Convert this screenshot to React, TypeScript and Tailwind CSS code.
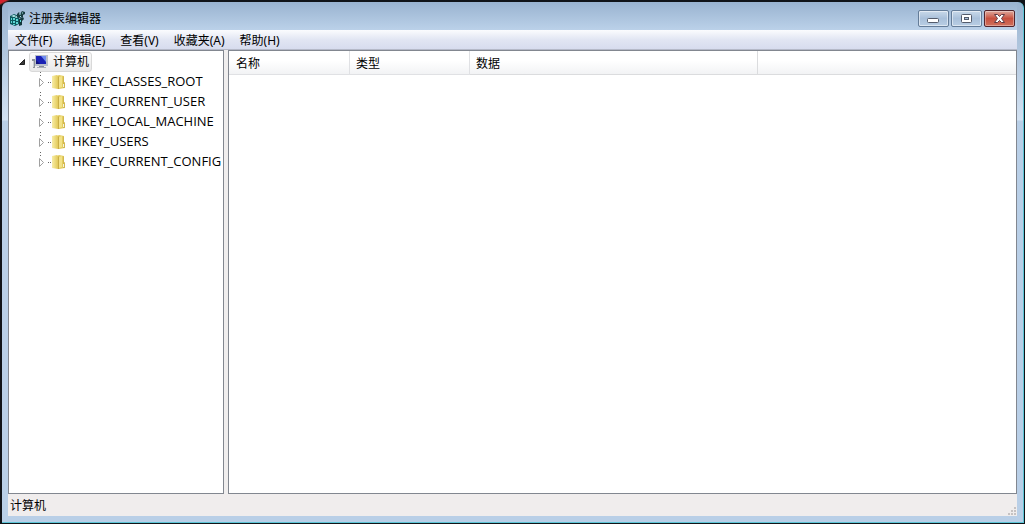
import type { ReactNode } from "react";

const menus = ["文件(F)", "编辑(E)", "查看(V)", "收藏夹(A)", "帮助(H)"];

const hives = [
  "HKEY_CLASSES_ROOT",
  "HKEY_CURRENT_USER",
  "HKEY_LOCAL_MACHINE",
  "HKEY_USERS",
  "HKEY_CURRENT_CONFIG",
];

function RegeditIcon() {
  return (
    <svg width="17" height="17" viewBox="0 0 17 17" className="shrink-0" aria-hidden="true">
      <path d="M1 6l4-2 5 2v8l-4 2-5-2z" fill="#0d5a5e" />
      <path d="M2 6l3-1 2 1-2 1zM6 7l2-1 1 1-2 1z" fill="#c8f8f6" />
      <path
        d="M2 8h1v2H2zM4 8h2v2H4zM2 11h1v2H2zM4 11h2v2H4zM7 9h2v2H7zM7 12h2v2H7zM4 14h2v1H4z"
        fill="#5cd6d4"
      />
      <path d="M8 4l2-2 1 2 2-3 3 1v2l-2 1v2l-3 1-3-1z" fill="#1b3d42" />
      <path d="M10 4l1-1 1 1-1 1zM13 3l1-1v2zM11 6h1v1h-1z" fill="#a3e6e6" />
      <path d="M10 9l4-2 1 2-2 2v4l-3 1z" fill="#14383d" />
      <path d="M11 10h1v2h-1z" fill="#5cd6d4" />
    </svg>
  );
}

function ComputerIcon() {
  return (
    <svg width="18" height="16" viewBox="0 0 18 16" className="shrink-0" aria-hidden="true">
      <path d="M0 5h3v9H1V7H0z" fill="#8d9299" />
      <path d="M1 7h1v6H1z" fill="#c9cdd3" />
      <rect x="3" y="1" width="13" height="11" fill="#b9bfcb" />
      <rect x="4" y="2" width="10" height="8" fill="#1a22b4" />
      <path d="M9 2h5v6z" fill="#6f8cf0" />
      <path d="M4 6l4 4H4z" fill="#10137c" />
      <path d="M7 12h5v1H7z" fill="#8a909a" />
      <path d="M5 13h9v1H5z" fill="#a9afb9" />
    </svg>
  );
}

function FolderIcon() {
  return (
    <svg width="16" height="18" viewBox="0 0 16 18" className="shrink-0" aria-hidden="true">
      <defs>
        <linearGradient id="folderFront" x1="0" x2="1" y1="0" y2="0">
          <stop offset="0" stopColor="#f8eda6" />
          <stop offset="1" stopColor="#e2ca5a" />
        </linearGradient>
      </defs>
      <path d="M6 3l2-1 5 1v6l1 1v5l-6 1z" fill="#e4cd60" />
      <path d="M12 3l1 1v5l1 1v5h-2z" fill="#d2b850" />
      <path d="M1 3l5-1 1 1v13l-6-1z" fill="url(#folderFront)" />
      <path d="M7 4l1-1v13H7z" fill="#c9ad44" />
      <path d="M8 4l3-1v11l-3 1z" fill="#f2e288" />
      <path d="M12 11h1v3h-1z" fill="#f4f2df" />
    </svg>
  );
}

function Grip() {
  return (
    <svg width="9" height="9" viewBox="0 0 9 9" className="shrink-0" aria-hidden="true">
      <path
        d="M6 0h2v2H6zM3 3h2v2H3zM6 3h2v2H6zM0 6h2v2H0zM3 6h2v2H3zM6 6h2v2H6z"
        fill="#c6c2c2"
      />
    </svg>
  );
}

type CaptionButtonProps = { label: string; close?: boolean; children: ReactNode };

function CaptionButton({ label, close, children }: CaptionButtonProps) {
  return (
    <button
      type="button"
      aria-label={label}
      className={
        close
          ? "flex h-[17px] w-[31px] items-center justify-center rounded-[2px] border border-[#52242c] bg-linear-to-b from-[#dda79c] via-[#c7503f] via-50% to-[#d0705c] inset-ring inset-ring-white/35"
          : "flex h-[17px] w-[31px] items-center justify-center rounded-[2px] border border-[#647c98] bg-linear-to-b from-[#c9d9e9] via-[#a9c0da] via-50% to-[#b9cee4] inset-ring inset-ring-white/50"
      }
    >
      {children}
    </button>
  );
}

function TitleBar() {
  return (
    <header className="flex h-7 shrink-0 items-center justify-between bg-linear-to-b from-[#99b3d0] to-[#bbd1e9] px-px">
      <div className="flex items-center gap-[3px] pt-1">
        <RegeditIcon />
        <h1 className="pt-0.5 text-xs">注册表编辑器</h1>
      </div>
      <div className="flex gap-0.5 pt-1 pr-px">
        <CaptionButton label="最小化">
          <svg width="13" height="13" viewBox="0 0 13 13">
            <rect x="0.5" y="6.5" width="11" height="4" rx="1" fill="#fff" stroke="#535b6b" />
          </svg>
        </CaptionButton>
        <CaptionButton label="最大化">
          <svg width="13" height="13" viewBox="0 0 13 13">
            <rect x="1.5" y="2.5" width="10" height="8" rx="1" fill="#fff" stroke="#535b6b" />
            <rect x="4.5" y="5.5" width="4" height="2" fill="#a9c0da" stroke="#535b6b" />
          </svg>
        </CaptionButton>
        <CaptionButton label="关闭" close>
          <svg width="13" height="13" viewBox="0 0 13 13">
            <path
              d="M1.5 2.5h3l2 2 2-2h3l-3 4 3 4h-3l-2-2-2 2h-3l3-4z"
              fill="#fff"
              stroke="#5d3a44"
            />
          </svg>
        </CaptionButton>
      </div>
    </header>
  );
}

function MenuBar() {
  return (
    <nav className="flex h-5 shrink-0 items-center gap-px border-b border-[#b5b9c8] bg-linear-to-b from-[#fbfcfe] via-[#e2e6f3] via-50% to-[#d7dcee]">
      {menus.map((menu) => (
        <button key={menu} type="button" className="px-[7px] pt-0.5 text-xs">
          {menu}
        </button>
      ))}
    </nav>
  );
}

function KeyTree() {
  return (
    <aside className="w-54 shrink-0 border border-[#828790] bg-white pt-px">
      <div className="flex h-5 items-center pl-2">
        <button type="button" aria-label="折叠" className="w-3">
          <svg width="10" height="8" viewBox="0 0 10 8">
            <path d="M7.500 1.500v5h-5z" fill="#3b3b3b" stroke="#222" />
          </svg>
        </button>
        <button
          type="button"
          className="flex h-5 items-center gap-[3px] rounded-[3px] border border-[#d9d9d9] bg-linear-to-b from-[#fafafa] to-[#e9e9e9] px-0.5 text-xs"
        >
          <ComputerIcon />
          计算机
        </button>
      </div>
      <ul>
        {hives.map((hive) => (
          <li key={hive} className="flex h-5 items-center pl-7">
            <button type="button" aria-label="展开" className="shrink-0">
              <svg width="14" height="20" viewBox="0 0 14 20">
                <path d="M3 0h1v1H3zM3 3h1v1H3zM11 10h1v1h-1zM13 10h1v1h-1z" fill="#666" />
                <path d="M2.500 6.500v8l4-4z" fill="#fff" stroke="#a0a0a0" />
              </svg>
            </button>
            <button
              type="button"
              className="flex items-center gap-[5px] font-['Open_Sans',sans-serif] text-[13px]"
            >
              <FolderIcon />
              {hive}
            </button>
          </li>
        ))}
      </ul>
    </aside>
  );
}

function ValueList() {
  return (
    <main className="min-w-0 grow border border-[#828790] bg-white">
      <table className="w-full table-fixed border-separate border-spacing-0 text-left text-xs">
        <thead>
          <tr className="h-6 bg-linear-to-b from-white via-white via-40% to-[#f1f2f4]">
            <th className="w-[121px] border-r border-b border-[#e0e1e4] px-[7px] pt-0.5 font-normal">
              名称
            </th>
            <th className="w-30 border-r border-b border-[#e0e1e4] px-1.5 pt-0.5 font-normal">
              类型
            </th>
            <th className="w-72 border-r border-b border-[#dbdcde] px-1.5 pt-0.5 font-normal">
              数据
            </th>
            <td className="border-b border-[#dbdcde]" />
          </tr>
        </thead>
      </table>
    </main>
  );
}

export default function App() {
  return (
    <div className="h-screen bg-linear-to-br from-[#d3202c] from-[3px] to-[#101318] to-[5px] pt-0.5 pr-px pb-px pl-0.5 font-['Noto_Sans','Noto_Sans_CJK_SC',sans-serif] text-black">
      <div className="flex h-full flex-col rounded-t-md border-r border-b border-[#5cc5d6] bg-linear-to-b from-[#99b3d0] via-[#d3e2f2] via-[118px] to-[#b9cfe7] to-[119px] px-1.5 pb-1.5">
        <TitleBar />
        <MenuBar />
        <div className="flex min-h-0 grow gap-1 bg-[#f0eeee]">
          <KeyTree />
          <ValueList />
        </div>
        <footer className="flex h-[22px] shrink-0 items-center justify-between bg-[#f0eded] pl-0.5 text-xs">
          <span className="pt-0.5">计算机</span>
          <span className="self-end">
            <Grip />
          </span>
        </footer>
      </div>
    </div>
  );
}
